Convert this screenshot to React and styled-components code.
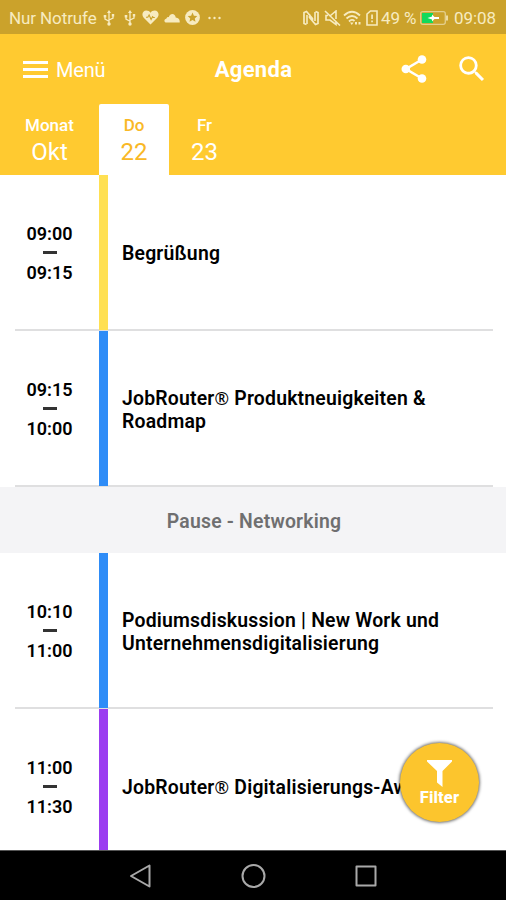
import React from 'react'
import styled, { createGlobalStyle } from 'styled-components'
import { MdSearch } from 'react-icons/md'

const days = [
    { label: 'Monat', value: 'Okt', width: 99 },
    { label: 'Do', value: '22', width: 70, active: true },
    { label: 'Fr', value: '23', width: 71 },
]

const sessions = [
    { start: '09:00', end: '09:15', color: '#ffe052', title: 'Begrüßung', line: true },
    { start: '09:15', end: '10:00', color: '#2e8cf7', title: 'JobRouter® Produktneuigkeiten & Roadmap', line: true },
    { pause: 'Pause - Networking' },
    { start: '10:10', end: '11:00', color: '#2e8cf7', title: 'Podiumsdiskussion | New Work und Unternehmensdigitalisierung', line: true },
    { start: '11:00', end: '11:30', color: '#9b3df0', title: 'JobRouter® Digitalisierungs-Award', nowrap: true },
]

// the registered sign is lighter than the rest of the title
function SessionTitle({ text, nowrap }) {
    const parts = text.split('®')

    return (
        <Title $nowrap={nowrap}>
            {parts[0]}
            {parts.length > 1 && <Registered>®</Registered>}
            {parts[1]}
        </Title>
    )
}

function Usb() {
    return (
        <Glyph $w={12} $h={16} viewBox="0 0 12 16">
            <path d="M6 2v11M6 11.2L2 9V6.500M6 10l4-2V5" fill="none" stroke="currentColor" strokeWidth="1.3" />
            <path d="M6 0l2 3H4zM.7 5h2.600v2.400H.7zM8.800 4h2.400v2.400H8.800z" />
            <circle cx="6" cy="14" r="1.700" />
        </Glyph>
    )
}

function App() {
    return (
        <Screen>
            <GlobalStyle />

            <StatusBar>
                <StatusText $w={94}>Nur Notrufe</StatusText>
                <Usb />
                <Spacer $w={9} />
                <Usb />
                <Spacer $w={6} />
                <Glyph $w={17} $h={15} viewBox="0 0 17 15">
                    <path d="M8.500 14.500L1.500 7.500C-.8 4.500.8.500 4.300.500c1.800 0 3.300.9 4.200 2.300C9.400 1.400 10.900.500 12.700.500c3.500 0 5.100 4 2.800 7z" />
                    <path d="M4 7.200h1.800l1.300-2.200 2 4.500 1.400-2.800.8.800h1.500" fill="none" stroke="#cba22b" strokeWidth="1.100" />
                </Glyph>
                <Spacer $w={5} />
                <Glyph $w={16} $h={10} viewBox="0 0 16 10">
                    <path d="M2.500 9.500C-.2 9.500-.3 6 2.300 5.800 2.700 4.300 4 3.900 4.800 4.200 6-.3 11.300 0 11.700 4.500c3 .2 4.300 2.200 4 5z" />
                </Glyph>
                <Spacer $w={5} />
                <Glyph $w={15} $h={15} viewBox="0 0 15 15">
                    <circle cx="7.500" cy="7.500" r="7.400" />
                    <path fill="#cba22b" d="M7.500 2.500l1.400 3.200 3.400.4-2.500 2.300.7 3.400-3-1.700-3 1.700.7-3.400-2.500-2.300 3.400-.4z" />
                </Glyph>
                <Spacer $w={8} />
                <Glyph $w={13} $h={4} viewBox="0 0 13 4">
                    <circle cx="1.500" cy="2" r="1.200" />
                    <circle cx="6.500" cy="2" r="1.200" />
                    <circle cx="11.500" cy="2" r="1.200" />
                </Glyph>

                <Push />

                <Glyph $w={16} $h={16} viewBox="0 0 16 16">
                    <path d="M3.500 14.500L1 13.500V2.500l2.500-1 6 7v3.500M12.500 1.500l2.500 1v11l-2.500 1-6-7V4" fill="none" stroke="currentColor" strokeWidth="1.700" />
                    <path d="M4 5v9M12 2v9" fill="none" stroke="currentColor" strokeWidth="1.600" />
                </Glyph>
                <Spacer $w={5} />
                <Glyph $w={17} $h={16} viewBox="0 0 17 16">
                    <path d="M6.500 5.500L12 1v8M12 12v2.500L6 10H2V5.500h2M1 1l15 14.500" fill="none" stroke="currentColor" strokeWidth="1.600" />
                </Glyph>
                <Spacer $w={2} />
                <Glyph $w={18} $h={16} viewBox="0 0 18 16">
                    <path d="M1 5.500Q9-2 17 5.500M3.500 8.500Q9 3.500 14.500 8.500M6 11.500Q9 8.500 11.500 11" fill="none" stroke="currentColor" strokeWidth="1.800" />
                    <path d="M7 12.500h3.500L8.800 15zM12 12h2v2.500h-2zM15.500 12h2v2.500h-2z" />
                </Glyph>
                <Spacer $w={5} />
                <Glyph $w={12} $h={16} viewBox="0 0 12 16">
                    <path d="M1 4l3.500-3H11v14H1z" fill="none" stroke="currentColor" strokeWidth="1.600" />
                    <path d="M5.200 4.500h1.700v4.500H5.200zM5.200 10.500h1.700v1.700H5.200z" />
                </Glyph>
                <Spacer $w={3} />
                <StatusText $w={39}>49 %</StatusText>
                <Glyph $w={29} $h={14} viewBox="0 0 29 14">
                    <rect x=".7" y=".7" width="24.600" height="12.600" rx="2" fill="none" stroke="#e3cf8d" strokeWidth="1.300" />
                    <path d="M27 4.500v5" stroke="currentColor" strokeWidth="1.600" />
                    <rect x="2" y="2" width="11" height="10" fill="#12d95b" />
                    <path d="M7.500 7l4.500-1.500V3.500L14.500 6H19v2h-4.500L12 10.500v-2z" fill="#fff" />
                </Glyph>
                <Spacer $w={5} />
                <StatusText $w={42}>09:08</StatusText>
            </StatusBar>

            <AppBar>
                <MenuButton>
                    <Burger><i /><i /><i /></Burger>
                    Menü
                </MenuButton>
                <PageTitle>Agenda</PageTitle>
                <Actions>
                    <Glyph $w={26} $h={28} viewBox="0 0 26 28">
                        <path d="M21 4.500L5 14l16 9.500" fill="none" stroke="currentColor" strokeWidth="2.600" />
                        <circle cx="21" cy="4.500" r="4.300" />
                        <circle cx="4.800" cy="14" r="4.300" />
                        <circle cx="21" cy="23.500" r="4.300" />
                    </Glyph>
                    <MdSearch size={34} />
                </Actions>
            </AppBar>

            <Days>
                {days.map((day) => (
                    <Day key={day.label} $width={day.width} $active={day.active}>
                        <DayLabel>{day.label}</DayLabel>
                        <DayValue>{day.value}</DayValue>
                    </Day>
                ))}
            </Days>

            <List>
                {sessions.map((item) => {

                    if (item.pause) return <Pause key={item.pause}>{item.pause}</Pause>

                    return (
                        <Session key={item.start} $line={item.line}>
                            <Time>
                                <span>{item.start}</span>
                                <Dash />
                                <span>{item.end}</span>
                            </Time>
                            <Stripe $color={item.color} />
                            <SessionTitle text={item.title} nowrap={item.nowrap} />
                        </Session>
                    )
                })}
            </List>

            <FilterButton>
                <svg width="25" height="27" viewBox="0 0 25 27" fill="#fff">
                    <path d="M0 0h25v1.500L15.500 11v16L10 22.500V11L0 1.500z" />
                </svg>
                Filter
            </FilterButton>

            <NavBar>
                <svg width="22" height="24" viewBox="0 0 22 24">
                    <path d="M20.500 1.500v21L2 12z" />
                </svg>
                <svg width="24" height="24" viewBox="0 0 24 24">
                    <circle cx="12.500" cy="12" r="11" />
                </svg>
                <svg width="22" height="22" viewBox="0 0 22 22">
                    <rect x="1.500" y="1.500" width="19" height="19" />
                </svg>
            </NavBar>
        </Screen>
    )
}

const GlobalStyle = createGlobalStyle`
    * {
        box-sizing: border-box;
    }

    body {
        margin: 0;
        font-family: Roboto, sans-serif;
    }
`;

const Screen = styled.div`
    position: relative;
    display: flex;
    flex-direction: column;
    width: 506px;
    height: 900px;
    overflow: hidden;
    background: #fff;
`;

const StatusBar = styled.div`
    display: flex;
    align-items: center;
    flex: none;
    height: 34px;
    padding: 1px 10px 0 9px;
    background: #cba22b;
    color: #f7ebc0;
`;

const StatusText = styled.span`
    flex: none;
    width: ${(props) => props.$w}px;
    font-size: 17px;
    letter-spacing: -0.1px;
    white-space: nowrap;
`;

const Glyph = styled.svg`
    flex: none;
    width: ${(props) => props.$w}px;
    height: ${(props) => props.$h}px;
    fill: currentColor;
`;

const Spacer = styled.span`
    flex: none;
    width: ${(props) => props.$w}px;
`;

const Push = styled.span`
    flex: 1;
`;

const AppBar = styled.header`
    display: grid;
    grid-template-columns: 1fr auto 1fr;
    align-items: center;
    flex: none;
    height: 70px;
    padding: 0 17px 0 18px;
    background: #ffca30;
    color: #fff;
`;

const MenuButton = styled.div`
    display: flex;
    align-items: center;
    gap: 8px;
    padding: 1px 0 0 5px;
    font-size: 20px;
    letter-spacing: -0.2px;
`;

const Burger = styled.span`
    display: flex;
    flex-direction: column;
    gap: 4px;
    width: 25px;

    i {
        height: 3.300px;
        background: #fff;
    }
`;

const PageTitle = styled.h1`
    margin: 0;
    padding-top: 1px;
    font-size: 22px;
    font-weight: 700;
    letter-spacing: 0.3px;
`;

const Actions = styled.div`
    display: flex;
    align-items: center;
    justify-content: flex-end;
    gap: 28px;
`;

const Days = styled.nav`
    display: flex;
    flex: none;
    height: 71px;
    background: #ffca30;
`;

const Day = styled.div`
    display: flex;
    flex-direction: column;
    align-items: center;
    width: ${(props) => props.$width}px;
    padding-top: 10px;
    border-radius: 2px 2px 0 0;
    background: ${(props) => (props.$active ? '#fff' : 'transparent')};
    color: ${(props) => (props.$active ? '#f9b826' : '#fff')};
`;

const DayLabel = styled.span`
    font-size: 17px;
    font-weight: 500;
    line-height: 22px;
`;

const DayValue = styled.span`
    font-size: 24px;
    line-height: 32px;
`;

const List = styled.main`
    flex: 1;
    overflow: hidden;
`;

const Session = styled.section`
    display: flex;
    align-items: center;
    height: ${(props) => (props.$line ? 156 : 155)}px;
    background: ${(props) => (props.$line ? 'linear-gradient(#dfdfe0, #dfdfe0) 15px 100% / 478px 2px no-repeat' : 'none')};
    padding-bottom: ${(props) => (props.$line ? 1 : 0)}px;
`;

const Time = styled.div`
    display: flex;
    flex-direction: column;
    align-items: center;
    width: 99px;
    padding-top: 2px;
    font-size: 18px;
    font-weight: 600;
    line-height: 20px;
`;

const Dash = styled.i`
    width: 14px;
    height: 3px;
    margin: 7px 0 9px;
    background: #333;
`;

const Stripe = styled.div`
    align-self: stretch;
    flex: none;
    width: 9px;
    background: ${(props) => props.$color};
`;

const Title = styled.h2`
    flex: 1;
    margin: 0;
    padding: 2px 40px 0 14px;
    font-size: 19.400px;
    font-weight: 600;
    line-height: 23px;
    letter-spacing: 0.2px;
    white-space: ${(props) => (props.$nowrap ? 'nowrap' : 'normal')};
`;

const Registered = styled.span`
    font-family: "Noto Sans", sans-serif;
    font-size: 17.500px;
    font-weight: 400;
    line-height: 1;
`;

const Pause = styled.div`
    display: flex;
    align-items: center;
    justify-content: center;
    height: 66px;
    padding: 2px 0 0 2px;
    background: #f4f4f6;
    color: #6f6f70;
    font-size: 19.400px;
    font-weight: 600;
    letter-spacing: 0.2px;
`;

/* floats over the list */
const FilterButton = styled.div`
    position: absolute;
    right: 27px;
    bottom: 78px;
    display: flex;
    flex-direction: column;
    align-items: center;
    gap: 2px;
    width: 79px;
    height: 79px;
    padding-top: 17px;
    border-radius: 50%;
    background: #fcc52d;
    box-shadow: 0 0 3px 1px rgba(0, 0, 0, 0.55);
    color: #fff;
    font-size: 16.500px;
    font-weight: 800;
    line-height: 17px;
    letter-spacing: 0.1px;
`;

const NavBar = styled.footer`
    display: flex;
    align-items: center;
    justify-content: center;
    gap: 90px;
    flex: none;
    height: 50px;
    border-top: 1px solid #555;
    background: #000;

    svg {
        overflow: visible;
        fill: none;
        stroke: #a9a9a9;
        stroke-width: 2;
        stroke-linejoin: round;
    }
`;

export default App
